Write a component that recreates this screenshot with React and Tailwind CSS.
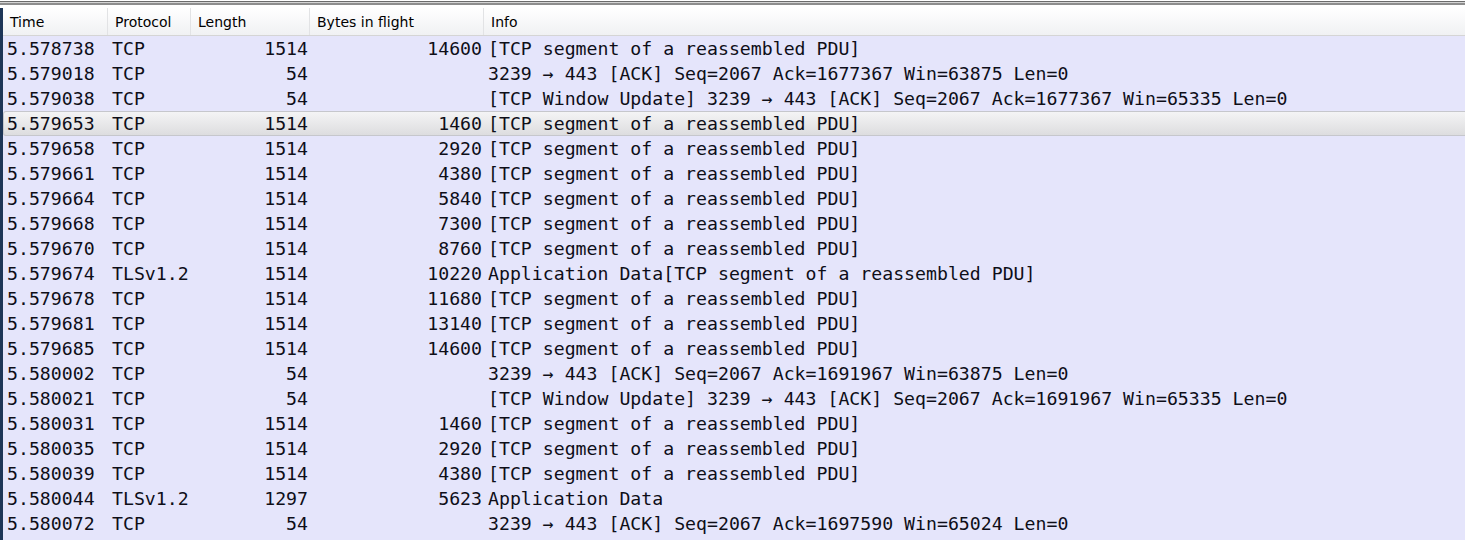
import React from 'react';

const SEG = '[TCP segment of a reassembled PDU]';

const rows = [
  ['5.578738', 'TCP', '1514', '14600', SEG],
  ['5.579018', 'TCP', '54', '', '3239 → 443 [ACK] Seq=2067 Ack=1677367 Win=63875 Len=0'],
  ['5.579038', 'TCP', '54', '', '[TCP Window Update] 3239 → 443 [ACK] Seq=2067 Ack=1677367 Win=65335 Len=0'],
  ['5.579653', 'TCP', '1514', '1460', SEG],
  ['5.579658', 'TCP', '1514', '2920', SEG],
  ['5.579661', 'TCP', '1514', '4380', SEG],
  ['5.579664', 'TCP', '1514', '5840', SEG],
  ['5.579668', 'TCP', '1514', '7300', SEG],
  ['5.579670', 'TCP', '1514', '8760', SEG],
  ['5.579674', 'TLSv1.2', '1514', '10220', 'Application Data' + SEG],
  ['5.579678', 'TCP', '1514', '11680', SEG],
  ['5.579681', 'TCP', '1514', '13140', SEG],
  ['5.579685', 'TCP', '1514', '14600', SEG],
  ['5.580002', 'TCP', '54', '', '3239 → 443 [ACK] Seq=2067 Ack=1691967 Win=63875 Len=0'],
  ['5.580021', 'TCP', '54', '', '[TCP Window Update] 3239 → 443 [ACK] Seq=2067 Ack=1691967 Win=65335 Len=0'],
  ['5.580031', 'TCP', '1514', '1460', SEG],
  ['5.580035', 'TCP', '1514', '2920', SEG],
  ['5.580039', 'TCP', '1514', '4380', SEG],
  ['5.580044', 'TLSv1.2', '1297', '5623', 'Application Data'],
  ['5.580072', 'TCP', '54', '', '3239 → 443 [ACK] Seq=2067 Ack=1697590 Win=65024 Len=0'],
];

const SELECTED = 3;

const headers = ['Time', 'Protocol', 'Length', 'Bytes in flight', 'Info'];

const cols = 'grid grid-cols-[105px_83px_119px_174px_1fr]';

export default function App() {
  return (
    <div className="w-[1465px] h-[540px] overflow-hidden bg-[#e5e5fb]">
      {/* window frame top */}
      <div className="h-px bg-white" />
      <div className="h-px bg-[#6b6b6b]" />
      <div className="h-px bg-[#d4d4d4]" />
      <div className="h-[2px] bg-[#8e8e8e]" />
      <div className="h-[3px] bg-white" />

      <div className="border-l-[3px] border-[#1d3557] h-full">
        {/* header */}
        <div
          className={`${cols} h-[28px] bg-gradient-to-b from-white to-[#f0f1f3] border-b border-[#d5d5d5] text-[14px] text-black`}
          style={{ fontFamily: '"DejaVu Sans", Tahoma, sans-serif' }}
        >
          {headers.map((h, i) => (
            <div
              key={h}
              className={`pl-[7px] pt-[2px] leading-[25px] ${i < 4 ? 'border-r border-[#e2e3e5]' : ''}`}
            >
              {h}
            </div>
          ))}
        </div>

        {/* packet rows */}
        <div
          className="text-[18.2px] text-[#0e0e18]"
          style={{ fontFamily: '"DejaVu Sans Mono", "Liberation Mono", monospace' }}
        >
          {rows.map((r, i) => (
            <div
              key={i}
              className={`${cols} h-[25px] leading-[25px] whitespace-pre ${
                i === SELECTED
                  ? '-mr-[8px] rounded-[3px] shadow-[inset_0_0_0_1px_#c6c7cc] bg-gradient-to-b from-[#f5f5f6] to-[#dcdcde]'
                  : ''
              }`}
            >
              <div className="pl-[4px]">{r[0]}</div>
              <div className="pl-[4px]">{r[1]}</div>
              <div className="text-right pr-[2px]">{r[2]}</div>
              <div className="text-right pr-[2px]">{r[3]}</div>
              <div className="pl-[4px]">{r[4]}</div>
            </div>
          ))}
        </div>
      </div>
    </div>
  );
}
